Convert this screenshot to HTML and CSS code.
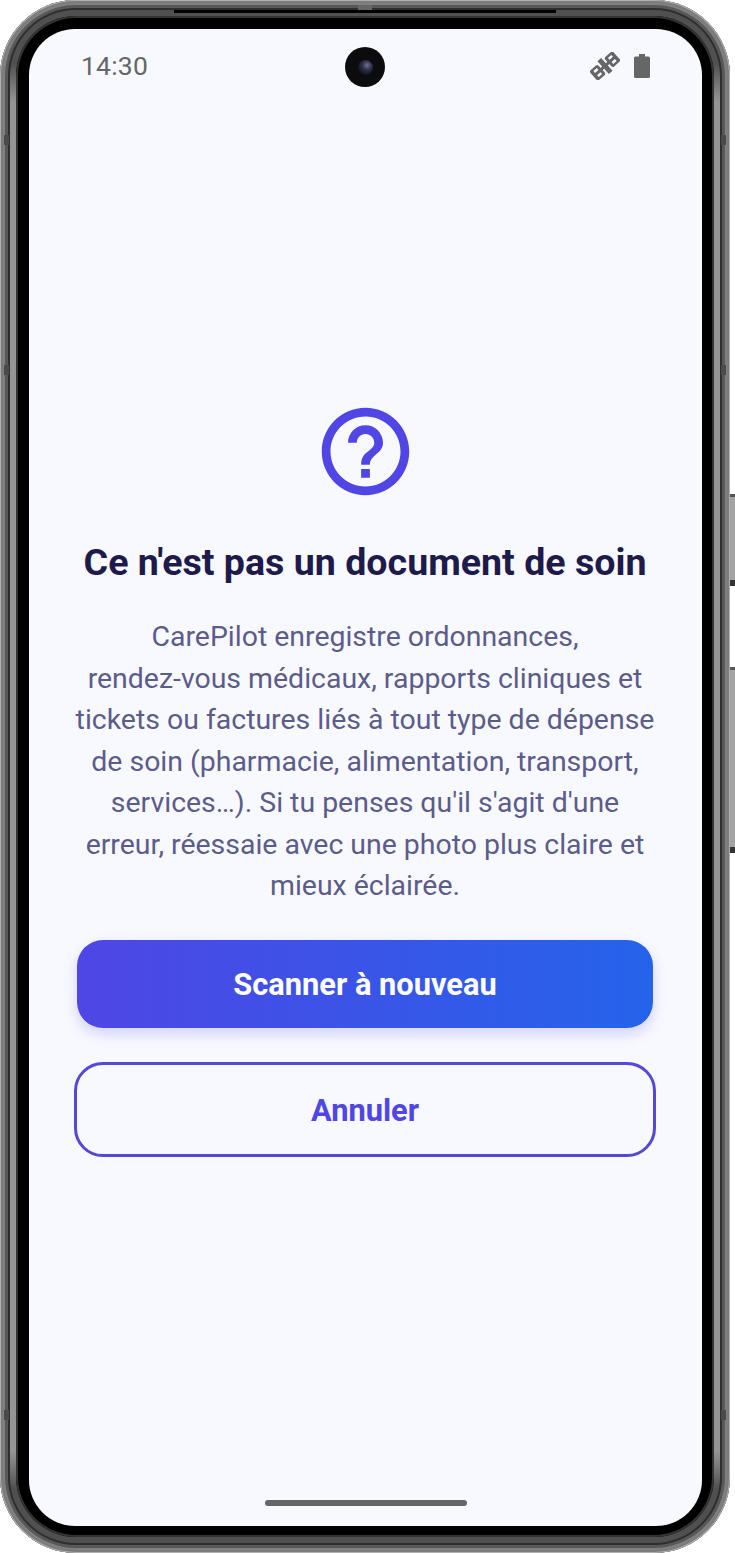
FILE: index.html
```html
<!DOCTYPE html>
<html lang="fr">
<head>
    <meta charset="UTF-8">
    <meta name="viewport" content="width=device-width, initial-scale=1.0">
    <title>CarePilot</title>
    <link rel="stylesheet" href="styles.css">
</head>
<body>
    <div class="phone">
        <!-- Side buttons -->
        <div class="side-button volume"></div>
        <div class="side-button power"></div>

        <!-- Antenna bands -->
        <div class="band band-top"></div>
        <div class="band band-side left-1"></div>
        <div class="band band-side left-2"></div>
        <div class="band band-side left-3"></div>
        <div class="band band-side right-1"></div>
        <div class="band band-side right-2"></div>
        <div class="band band-side right-3"></div>
        <div class="top-notch"></div>

        <div class="ring">
            <div class="bezel">
                <div class="screen">
                    <!-- Status bar -->
                    <div class="status-bar">
                        <div class="time">14:30</div>
                        <div class="camera"><div class="lens"></div></div>
                        <div class="status-icons">
                            <svg class="satellite" viewBox="0 0 30 28">
                                <g transform="rotate(-42 15 14)" fill="#666" fill-rule="evenodd">
                                    <path d="M1.500 7.500h7a2 2 0 0 1 2 2v9a2 2 0 0 1-2 2h-7a2 2 0 0 1-2-2v-9a2 2 0 0 1 2-2zM3 10v2.500h4.500v-2.500zM3 15.500v2.500h4.500v-2.500z"/>
                                    <rect x="12.500" y="5.500" width="5" height="17"/>
                                    <rect x="10" y="12.500" width="10" height="3"/>
                                    <path d="M21.500 7.500h7a2 2 0 0 1 2 2v9a2 2 0 0 1-2 2h-7a2 2 0 0 1-2-2v-9a2 2 0 0 1 2-2zM22.500 10v2.500h4.500v-2.500zM22.500 15.500v2.500h4.500v-2.500z"/>
                                </g>
                            </svg>
                            <svg class="battery" viewBox="0 0 16 24">
                                <path fill="#666" d="M5 0h6v2.500h3.500a1.500 1.500 0 0 1 1.500 1.500v18.500a1.500 1.500 0 0 1-1.500 1.500h-13a1.500 1.500 0 0 1-1.500-1.500v-18.500a1.500 1.500 0 0 1 1.500-1.500h3.500z"/>
                            </svg>
                        </div>
                    </div>

                    <!-- Message -->
                    <div class="content">
                        <svg class="help-icon" viewBox="0 0 24 24">
                            <path fill="#4f46e5" d="M11 18h2v-2h-2v2zm1-16C6.480 2 2 6.480 2 12s4.480 10 10 10 10-4.480 10-10S17.520 2 12 2zm0 18c-4.410 0-8-3.590-8-8s3.590-8 8-8 8 3.590 8 8-3.590 8-8 8zm0-14c-2.210 0-4 1.790-4 4h2c0-1.100.9-2 2-2s2 .9 2 2c0 2-3 1.750-3 5h2c0-2.250 3-2.500 3-5 0-2.210-1.790-4-4-4z"/>
                        </svg>
                        <h1 class="title">Ce n'est pas un document de soin</h1>
                        <p class="message">CarePilot enregistre ordonnances,<br>rendez-vous médicaux, rapports cliniques et<br>tickets ou factures liés à tout type de dépense<br>de soin (pharmacie, alimentation, transport,<br>services…). Si tu penses qu'il s'agit d'une<br>erreur, réessaie avec une photo plus claire et<br>mieux éclairée.</p>
                        <button class="btn btn-primary">Scanner à nouveau</button>
                        <button class="btn btn-outline">Annuler</button>
                    </div>

                    <div class="home-bar"></div>
                </div>
            </div>
        </div>
    </div>
</body>
</html>
```

FILE: styles.css
```css
body {
    margin: 0;
    padding: 0;
    background-color: #fff;
    font-family: Roboto, "Liberation Sans", sans-serif;
    overflow: hidden;
}
/* Device frame */
.phone {
    position: relative;
    width: 730px;
    height: 1553px;
    box-sizing: border-box;
    padding: 10px;
    background-color: #2e2e2e;
    border-radius: 76px;
    box-shadow:
        inset 0 0 0 1px #b0b0b0,
        inset 0 0 0 3px #7c7c7c,
        inset 0 0 0 5px #808080,
        inset 0 0 0 8px #585858;
}
.ring {
    height: 100%;
    box-sizing: border-box;
    padding: 6px;
    border-radius: 66px;
    background: linear-gradient(180deg, #505050 0, #505050 3.500%, #959595 6%, #959595 94%, #505050 96.500%, #505050 100%);
}
.bezel {
    height: 100%;
    box-sizing: border-box;
    padding: 13px 12px 11px 13px;
    background-color: #000;
    border-radius: 60px;
    box-shadow: inset 0 0 0 2px #333;
}
.side-button {
    position: absolute;
    left: 730px;
    width: 5px;
    background-color: #a3a3a3;
    border-top: 3px solid #555;
    border-bottom: 6px solid #333;
    box-sizing: border-box;
}
.volume {
    top: 494px;
    height: 92px;
}
.power {
    top: 667px;
    height: 186px;
}
.band {
    position: absolute;
    background-color: #4a4a4a;
}
.band-top {
    left: 358px;
    top: 5px;
    width: 14px;
    height: 5px;
    background-color: #666;
}
.band-side {
    width: 5px;
    height: 10px;
}
.left-1 { left: 4px; top: 135px; }
.left-2 { left: 4px; top: 365px; }
.left-3 { left: 4px; top: 1410px; }
.right-1 { right: 4px; top: 135px; }
.right-2 { right: 4px; top: 365px; }
.right-3 { right: 4px; top: 1410px; }
.top-notch {
    position: absolute;
    left: 174px;
    top: 10px;
    width: 382px;
    height: 3px;
    background-color: #000;
}
/* Screen */
.screen {
    display: flex;
    flex-direction: column;
    height: 100%;
    background-color: #f8f9ff;
    border-radius: 46px;
}
.status-bar {
    display: grid;
    grid-template-columns: 1fr auto 1fr;
    align-items: center;
    height: 40px;
    padding: 18px 53px 0 52px;
}
.time {
    font-size: 26.500px;
    color: #666;
    letter-spacing: 0.2px;
    margin-top: -4px;
}
.camera {
    display: flex;
    align-items: center;
    justify-content: center;
    width: 40px;
    height: 40px;
    background-color: #0c0c0e;
    border-radius: 50%;
}
.lens {
    width: 15px;
    height: 15px;
    border-radius: 50%;
    background: radial-gradient(circle at 60% 35%, #7c6aa0 0, #2c3346 35%, #0f1218 75%);
}
.status-icons {
    display: flex;
    justify-content: flex-end;
    align-items: center;
    gap: 14px;
    margin: -2px -1px 0 0;
}
.satellite {
    width: 30px;
    height: 28px;
}
.battery {
    width: 16px;
    height: 24px;
}
/* Message */
.content {
    display: flex;
    flex-direction: column;
    align-items: center;
    padding: 0 46.500px 0 45.500px;
    margin-top: 312px;
}
.help-icon {
    width: 105px;
    height: 105px;
}
.title {
    margin: 33px 0 0;
    font-size: 37.600px;
    font-weight: 700;
    line-height: 50px;
    color: #1e1b4b;
    white-space: nowrap;
}
.message {
    margin: 29px 0 0;
    font-size: 28.450px;
    line-height: 41.500px;
    color: #5c5c8a;
    text-align: center;
    white-space: nowrap;
}
.btn {
    display: block;
    font-family: inherit;
    font-size: 30.800px;
    font-weight: 700;
    box-sizing: border-box;
}
.btn-primary {
    width: 576px;
    height: 88px;
    margin-top: 33px;
    padding-top: 2px;
    color: #fff;
    background: linear-gradient(90deg, #4f46e5, #2563eb);
    border: none;
    border-radius: 26px;
    box-shadow: 0 6px 14px rgba(79, 70, 229, 0.22);
}
.btn-outline {
    width: 582px;
    height: 95px;
    margin-top: 34px;
    padding-top: 3px;
    color: #4f46e5;
    background: transparent;
    border: 3px solid #5548d8;
    border-radius: 29px;
}
.home-bar {
    width: 202px;
    height: 6px;
    margin: auto auto 20px;
    background-color: #666;
    border-radius: 3px;
}
```
